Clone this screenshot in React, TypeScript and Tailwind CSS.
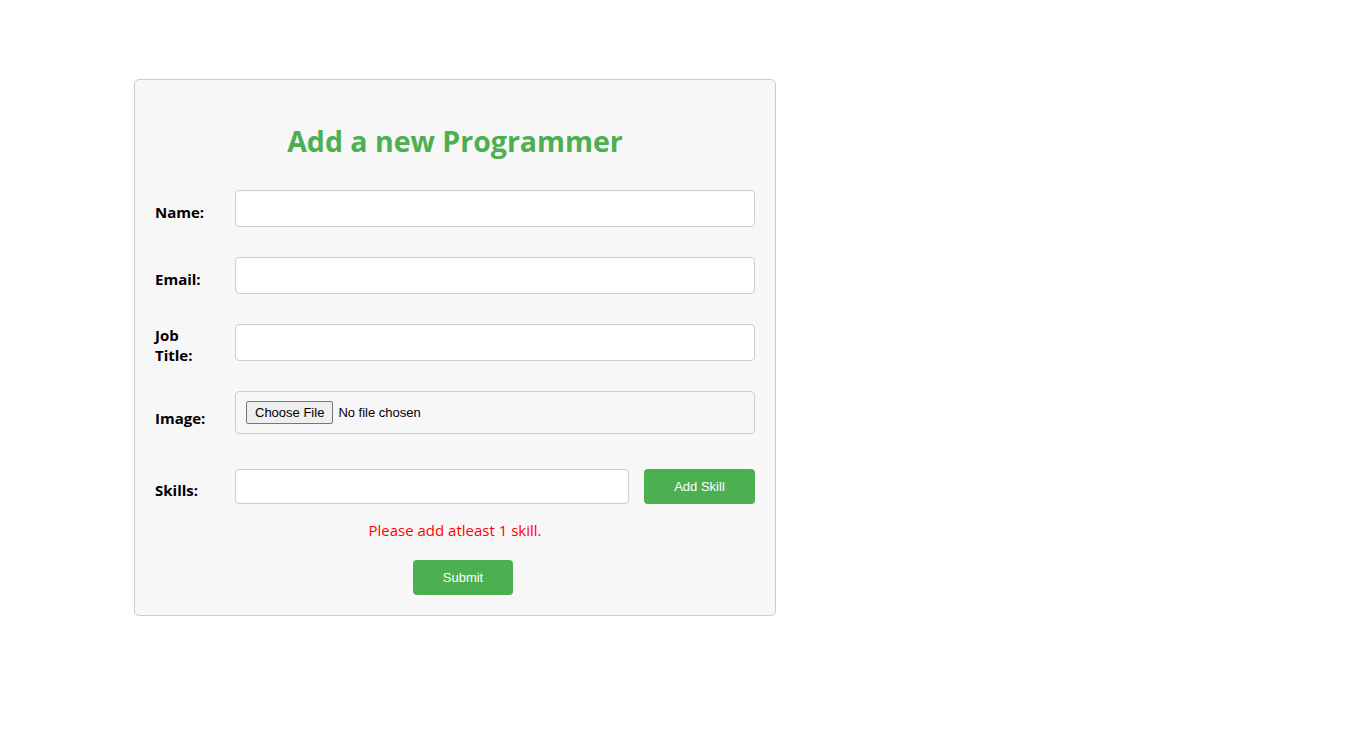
import React, { useState } from "react";

const labelCls =
  "w-[60px] mr-[20px] shrink-0 font-bold text-[15px] leading-[20px] text-black";
const inputCls =
  "flex-1 h-[37px] bg-white border border-[#cccccc] rounded-[4px] px-[10px] text-[14px] outline-none";

export default function App() {
  const [skill, setSkill] = useState("");
  const [skills, setSkills] = useState<string[]>([]);

  return (
    <div className="min-h-[741px] bg-white font-['Open_Sans','Noto_Sans',sans-serif] pt-[79px] pl-[134px]">
      <div className="w-[642px] bg-[#f7f7f7] border border-[#cccccc] rounded-[5px] px-[20px] pt-[43px] pb-[20px]">
        <h2 className="text-center text-[#4caf50] font-bold text-[28.5px] leading-[36px]">
          Add a new Programmer
        </h2>

        <div className="flex items-center h-[37px] mt-[31px]">
          <label className={labelCls + " pt-[7px]"}>Name:</label>
          <input type="text" className={inputCls} />
        </div>

        <div className="flex items-center h-[37px] mt-[30px]">
          <label className={labelCls + " pt-[7px]"}>Email:</label>
          <input type="email" className={inputCls} />
        </div>

        <div className="flex items-center h-[37px] mt-[30px]">
          <label className={labelCls + " pt-[5px]"}>
            Job
            <br />
            Title:
          </label>
          <input type="text" className={inputCls} />
        </div>

        <div className="flex items-center h-[43px] mt-[30px]">
          <label className={labelCls + " pt-[10px]"}>Image:</label>
          <div className="flex-1 h-[43px] border border-[#cccccc] rounded-[4px] px-[10px] flex items-center">
            <input
              type="file"
              className="font-['Liberation_Sans',Arial,sans-serif] text-[13px] text-black file:mr-[5px] file:px-[8px] file:py-[1px] file:bg-[#efefef] file:border file:border-[#767676] file:rounded-[2px] file:text-[13px]"
            />
          </div>
        </div>

        <div className="flex items-center h-[35px] mt-[35px]">
          <label className={labelCls + " pt-[7px]"}>Skills:</label>
          <input
            type="text"
            value={skill}
            onChange={(e) => setSkill(e.target.value)}
            className="w-[394px] h-[35px] bg-white border border-[#cccccc] rounded-[4px] px-[10px] text-[14px] outline-none"
          />
          <button
            className="ml-auto w-[111px] h-[35px] bg-[#4caf50] text-white rounded-[4px] font-['Liberation_Sans',Arial,sans-serif] text-[13px]"
            onClick={() => {
              if (skill.trim()) {
                setSkills([...skills, skill.trim()]);
                setSkill("");
              }
            }}
          >
            Add Skill
          </button>
        </div>

        {skills.length === 0 && (
          <p className="text-center text-[#ff0000] text-[15px] leading-[20px] mt-[16px]">
            Please add atleast 1 skill.
          </p>
        )}

        <div className="flex justify-center pl-[16px] mt-[20px]">
          <button className="w-[100px] h-[35px] bg-[#4caf50] text-white rounded-[4px] font-['Liberation_Sans',Arial,sans-serif] text-[13px]">
            Submit
          </button>
        </div>
      </div>
    </div>
  );
}
